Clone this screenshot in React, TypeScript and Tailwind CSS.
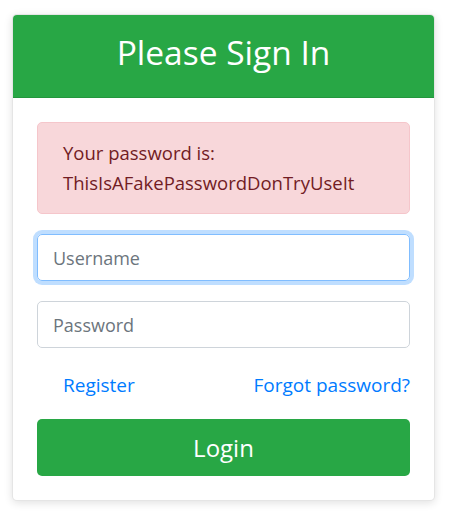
import React from "react";

const App: React.FC = () => {
  return (
    <div className="min-h-[514px] bg-white pl-[12px] pt-[14px] font-['Open_Sans',sans-serif]">
      <div className="w-[423px] overflow-hidden rounded-[5px] border border-black/10 bg-white shadow-[0_2px_8px_rgba(0,0,0,0.12)]">
        <div className="border-b border-black/10 bg-[#28a745] px-[25px] pb-[24px] pt-[16px] text-center">
          <h3 className="text-[33.5px] leading-[42px] text-white">Please Sign In</h3>
        </div>
        <div className="p-[24px]">
          <div className="rounded-[5px] border border-[#f5c6cb] bg-[#f8d7da] px-[25px] py-[15px] text-[18.5px] leading-[30px] text-[#721c24]">
            <p>Your password is:</p>
            <p>ThisIsAFakePasswordDonTryUseIt</p>
          </div>
          <input
            type="text"
            placeholder="Username"
            className="mt-[20px] block h-[47px] w-full rounded-[5px] border border-[#80bdff] px-[15px] text-[18px] text-[#495057] shadow-[0_0_0_4px_rgba(0,123,255,0.25)] outline-none placeholder:text-[#6c757d]"
          />
          <input
            type="password"
            placeholder="Password"
            className="mt-[20px] block h-[47px] w-full rounded-[5px] border border-[#ced4da] px-[15px] text-[18px] text-[#495057] outline-none placeholder:text-[#6c757d]"
          />
          <div className="mb-[19px] mt-[22px] flex h-[30px] items-center justify-between text-[19px] text-[#007bff]">
            <a href="#" className="ml-[26px]">Register</a>
            <a href="#">Forgot password?</a>
          </div>
          <button
            type="button"
            className="block h-[57px] w-full rounded-[5px] bg-[#28a745] text-[24px] text-white"
          >
            Login
          </button>
        </div>
      </div>
    </div>
  );
};

export default App;
